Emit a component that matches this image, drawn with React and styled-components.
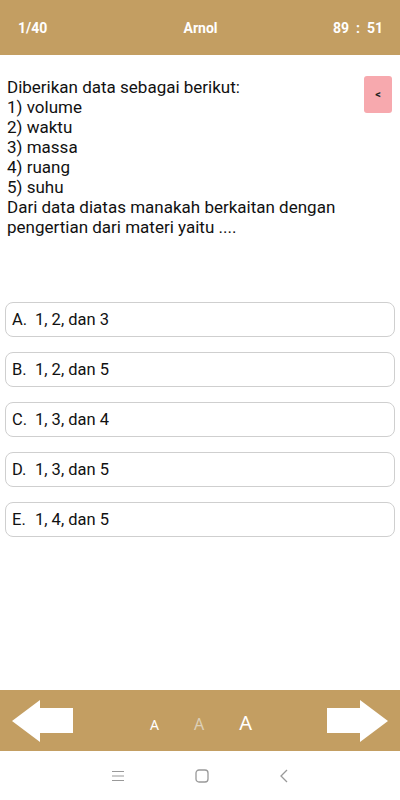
import React from 'react';
import styled, { createGlobalStyle } from 'styled-components';

const GOLD = '#c39e62';

const GlobalStyle = createGlobalStyle`
  html, body {
    margin: 0;
    padding: 0;
    background: #fff;
    font-family: Roboto, "Liberation Sans", sans-serif;
  }
`;

const Page = styled.div`
  width: 400px;
  height: 800px;
  display: flex;
  flex-direction: column;
  overflow: hidden;
`;

const Header = styled.div`
  height: 55px;
  background: ${GOLD};
  display: grid;
  grid-template-columns: 1fr auto 1fr;
  align-items: center;
  padding: 0 17px 0 18px;
  color: #fff;
  font-size: 14px;
  font-weight: bold;
`;

const HeaderCell = styled.div`
  text-align: ${(p) => p.align || 'left'};
  white-space: pre;
`;

const Content = styled.div`
  flex: 1;
  display: flex;
  flex-direction: column;
`;

const QuestionRow = styled.div`
  height: 210px;
  margin-top: 22px;
  padding: 0 8px 0 7px;
  display: flex;
  justify-content: space-between;
  align-items: flex-start;
`;

const QuestionText = styled.div`
  font-size: 17px;
  line-height: 20px;
  color: #111;
`;

const BackButton = styled.div`
  width: 28px;
  height: 37px;
  margin-top: -1px;
  background: #f7a9ae;
  border-radius: 3px;
  display: flex;
  align-items: center;
  justify-content: center;
  font-size: 11px;
  font-weight: bold;
  color: #222;
  flex-shrink: 0;
`;

const Options = styled.div`
  margin-top: 15px;
  padding: 0 5px;
  display: flex;
  flex-direction: column;
  gap: 15px;
`;

const Option = styled.div`
  height: 35px;
  box-sizing: border-box;
  border: 1px solid #cfcfcf;
  border-radius: 8px;
  display: flex;
  align-items: center;
  padding-left: 6px;
  font-size: 16.5px;
  color: #111;
`;

const Letter = styled.span`
  width: 23px;
`;

const BottomBar = styled.div`
  height: 61px;
  background: ${GOLD};
  display: flex;
  align-items: center;
  justify-content: space-between;
  padding: 0 12px;
`;

const FontSizes = styled.div`
  display: flex;
  align-items: baseline;
  gap: 35px;
  padding-top: 3px;
  margin-left: 2px;
`;

const SizeA = styled.span`
  font-family: "Noto Sans", Roboto, sans-serif;
  font-size: ${(p) => p.size}px;
  color: ${(p) => (p.dim ? '#ddd0b8' : '#fff')};
`;

const NavBar = styled.div`
  height: 49px;
  display: flex;
  align-items: center;
  justify-content: center;
  gap: 70px;
`;

const Arrow = ({ dir }) => (
  <svg width="61" height="42" viewBox="0 0 61 42">
    {dir === 'left' ? (
      <polygon points="0,21 28,0 28,8 61,8 61,33 28,33 28,42" fill="#fff" />
    ) : (
      <polygon points="61,21 33,0 33,8 0,8 0,33 33,33 33,42" fill="#fff" />
    )}
  </svg>
);

const options = [
  ['A.', '1, 2, dan 3'],
  ['B.', '1, 2, dan 5'],
  ['C.', '1, 3, dan 4'],
  ['D.', '1, 3, dan 5'],
  ['E.', '1, 4, dan 5'],
];

export default function App() {
  return (
    <Page>
      <GlobalStyle />
      <Header>
        <HeaderCell>1/40</HeaderCell>
        <HeaderCell align="center">Arnol</HeaderCell>
        <HeaderCell align="right">{'89  :  51'}</HeaderCell>
      </Header>
      <Content>
        <QuestionRow>
          <QuestionText>
            Diberikan data sebagai berikut:<br />
            1) volume<br />
            2) waktu<br />
            3) massa<br />
            4) ruang<br />
            5) suhu<br />
            Dari data diatas manakah berkaitan dengan<br />
            pengertian dari materi yaitu ....
          </QuestionText>
          <BackButton>&lt;</BackButton>
        </QuestionRow>
        <Options>
          {options.map(([l, t]) => (
            <Option key={l}>
              <Letter>{l}</Letter>
              {t}
            </Option>
          ))}
        </Options>
      </Content>
      <BottomBar>
        <Arrow dir="left" />
        <FontSizes>
          <SizeA size={14}>A</SizeA>
          <SizeA size={16} dim>A</SizeA>
          <SizeA size={20}>A</SizeA>
        </FontSizes>
        <Arrow dir="right" />
      </BottomBar>
      <NavBar>
        <svg width="14" height="12" viewBox="0 0 14 12">
          <path d="M1 1.5H13M1 6H13M1 10.5H13" stroke="#999" strokeWidth="1.2" />
        </svg>
        <svg width="14" height="14" viewBox="0 0 14 14">
          <rect x="1" y="1" width="12" height="12" rx="3" fill="none" stroke="#999" strokeWidth="1.3" />
        </svg>
        <svg width="10" height="14" viewBox="0 0 10 14">
          <path d="M8 1L2 7L8 13" fill="none" stroke="#999" strokeWidth="1.3" />
        </svg>
      </NavBar>
    </Page>
  );
}
